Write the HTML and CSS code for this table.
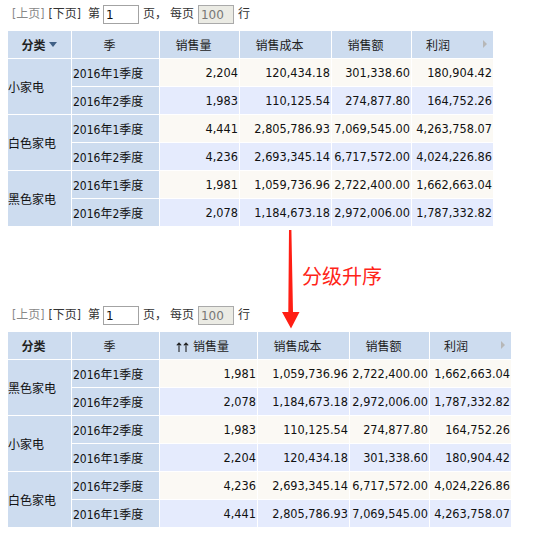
FILE: index.html
```html
<!DOCTYPE html>
<html lang="zh">
<head>
<meta charset="utf-8">
<title>分级升序</title>
<link rel="stylesheet" href="styles.css">
</head>
<body>
<div class="pager">
  <span class="pg-prev">[上页]</span>
  <span class="pg-next">[下页]</span>
  <span class="pg-di">第</span>
  <input class="pg-num" type="text" value="1">
  <span class="pg-ye">页，</span>
  <span class="pg-mei">每页</span>
  <input class="pg-size" type="text" value="100" disabled>
  <span class="pg-hang">行</span>
</div>
<table class="grid grid-a">
  <thead>
    <tr>
      <th class="c-cat b"><span>分类</span><i class="sortdesc"></i></th>
      <th class="c-q"><span>季</span><i class="ph"></i></th>
      <th class="c-n1"><span>销售量</span><i class="ph"></i></th>
      <th class="c-n2"><span>销售成本</span><i class="ph"></i></th>
      <th class="c-n3"><span>销售额</span><i class="ph"></i></th>
      <th class="c-n4 more"><span>利润</span><i class="ph"></i></th>
    </tr>
  </thead>
  <tbody>
    <tr class="odd"><td class="cat" rowspan="2">小家电</td><td class="q">2016年1季度</td><td class="n">2,204</td><td class="n">120,434.18</td><td class="n">301,338.60</td><td class="n">180,904.42</td></tr>
    <tr class="even"><td class="q">2016年2季度</td><td class="n">1,983</td><td class="n">110,125.54</td><td class="n">274,877.80</td><td class="n">164,752.26</td></tr>
    <tr class="odd"><td class="cat" rowspan="2">白色家电</td><td class="q">2016年1季度</td><td class="n">4,441</td><td class="n">2,805,786.93</td><td class="n">7,069,545.00</td><td class="n">4,263,758.07</td></tr>
    <tr class="even"><td class="q">2016年2季度</td><td class="n">4,236</td><td class="n">2,693,345.14</td><td class="n">6,717,572.00</td><td class="n">4,024,226.86</td></tr>
    <tr class="odd"><td class="cat" rowspan="2">黑色家电</td><td class="q">2016年1季度</td><td class="n">1,981</td><td class="n">1,059,736.96</td><td class="n">2,722,400.00</td><td class="n">1,662,663.04</td></tr>
    <tr class="even"><td class="q">2016年2季度</td><td class="n">2,078</td><td class="n">1,184,673.18</td><td class="n">2,972,006.00</td><td class="n">1,787,332.82</td></tr>
  </tbody>
</table>
<div class="note">
  <svg class="note-arrow" width="18" height="99" viewBox="0 0 18 99">
    <polygon points="7,0 9.4,0 11,82 17.5,82 9,98.5 0,82 6.3,82" fill="#ff1e14"/>
  </svg>
  <span class="note-label">分级升序</span>
</div>
<div class="pager">
  <span class="pg-prev">[上页]</span>
  <span class="pg-next">[下页]</span>
  <span class="pg-di">第</span>
  <input class="pg-num" type="text" value="1">
  <span class="pg-ye">页，</span>
  <span class="pg-mei">每页</span>
  <input class="pg-size" type="text" value="100" disabled>
  <span class="pg-hang">行</span>
</div>
<table class="grid grid-b">
  <thead>
    <tr>
      <th class="c-cat b"><span>分类</span><i class="ph"></i></th>
      <th class="c-q"><span>季</span><i class="ph"></i></th>
      <th class="c-n1w"><svg class="asc" width="13" height="10" viewBox="0 0 13 10"><path d="M3 10V1M0.8 3.4L3 1L5.2 3.4M10 10V1M7.8 3.4L10 1L12.2 3.4" fill="none" stroke="#222" stroke-width="1.1"/></svg><span>销售量</span><i class="ph"></i></th>
      <th class="c-n2"><span>销售成本</span><i class="ph"></i></th>
      <th class="c-n3"><span>销售额</span><i class="ph"></i></th>
      <th class="c-n4 more"><span>利润</span><i class="ph"></i></th>
    </tr>
  </thead>
  <tbody>
    <tr class="odd"><td class="cat" rowspan="2">黑色家电</td><td class="q">2016年1季度</td><td class="n">1,981</td><td class="n">1,059,736.96</td><td class="n">2,722,400.00</td><td class="n">1,662,663.04</td></tr>
    <tr class="even"><td class="q">2016年2季度</td><td class="n">2,078</td><td class="n">1,184,673.18</td><td class="n">2,972,006.00</td><td class="n">1,787,332.82</td></tr>
    <tr class="odd"><td class="cat" rowspan="2">小家电</td><td class="q">2016年2季度</td><td class="n">1,983</td><td class="n">110,125.54</td><td class="n">274,877.80</td><td class="n">164,752.26</td></tr>
    <tr class="even"><td class="q">2016年1季度</td><td class="n">2,204</td><td class="n">120,434.18</td><td class="n">301,338.60</td><td class="n">180,904.42</td></tr>
    <tr class="odd"><td class="cat" rowspan="2">白色家电</td><td class="q">2016年2季度</td><td class="n">4,236</td><td class="n">2,693,345.14</td><td class="n">6,717,572.00</td><td class="n">4,024,226.86</td></tr>
    <tr class="even"><td class="q">2016年1季度</td><td class="n">4,441</td><td class="n">2,805,786.93</td><td class="n">7,069,545.00</td><td class="n">4,263,758.07</td></tr>
  </tbody>
</table>
</body>
</html>
```
FILE: styles.css
```css
html, body {
  background: #fff;
}
body {
  margin: 0;
  padding: 0 8px;
  font-family: "DejaVu Sans Condensed", "DejaVu Sans", "Noto Sans CJK SC", sans-serif;
  font-size: 12px;
  color: #222;
}

.pager {
  display: flex;
  align-items: center;
  height: 19px;
  padding: 5px 0 7px;
  line-height: 19px;
  color: #333;
}
.pg-prev { margin-left: 4px; color: #888; }
.pg-next { margin-left: 4px; }
.pg-di { margin-left: 7px; }
.pg-num,
.pg-size {
  box-sizing: border-box;
  width: 36px;
  height: 19px;
  margin: 0 0 0 3px;
  padding: 0 2px;
  border: 1px solid #a3a3a3;
  font-family: "DejaVu Sans", sans-serif;
  font-size: 12px;
  color: #111;
  background: #fff;
  outline: none;
}
.pg-size {
  margin-left: 4px;
  background: #ebebe4;
  color: #777;
  border-color: #aaa;
}
.pg-ye { margin-left: 4px; }
.pg-mei { margin-left: 3px; }
.pg-hang { margin-left: 4px; }

.grid {
  border-collapse: separate;
  border-spacing: 0;
  table-layout: fixed;
}
.grid-a { width: 486px; }
.grid-b { width: 504px; }

.grid th,
.grid td {
  box-sizing: border-box;
  height: 28px;
  padding: 0;
  border-right: 1px solid #fff;
  border-bottom: 1px solid #fff;
  white-space: nowrap;
  overflow: hidden;
}
.grid th {
  background: #cddcef;
  font-weight: normal;
  text-align: center;
  color: #222;
}
.grid th.b { font-weight: bold; }
.c-cat { width: 64px; }
.c-q { width: 88px; }
.c-n1 { width: 80px; }
.c-n1w { width: 98px; }
.c-n2 { width: 92px; }
.c-n3 { width: 80px; }
.c-n4 { width: 82px; }

.ph {
  display: inline-block;
  width: 12px;
}
.sortdesc {
  display: inline-block;
  width: 0;
  height: 0;
  margin: 0 1px 0 3px;
  border-left: 4px solid transparent;
  border-right: 4px solid transparent;
  border-top: 5px solid #3f5f85;
  vertical-align: 3px;
}
.asc {
  margin-right: 4px;
  vertical-align: -1px;
}
.grid th.more {
  position: relative;
  padding-right: 17px;
}
.grid th.more::after {
  content: "";
  position: absolute;
  right: 6px;
  top: 9px;
  border-left: 4px solid #b7b7b7;
  border-top: 4px solid transparent;
  border-bottom: 4px solid transparent;
}

.grid td {
  color: #111;
}
.grid td.cat {
  background: #cddcef;
  text-align: left;
}
.grid td.q {
  background: #cddcef;
  text-align: left;
  padding-left: 1px;
}
.grid td.n {
  text-align: right;
  padding-right: 1px;
  font-size: 12.6px;
}
.grid tr.odd td.n { background: #fbf9f4; }
.grid tr.even td.n { background: #e5ebfd; }

.note {
  position: relative;
  height: 74px;
}
.note-arrow {
  position: absolute;
  left: 274px;
  top: 3px;
}
.note-label {
  position: absolute;
  left: 294px;
  top: 37px;
  font-family: "Noto Sans CJK SC", sans-serif;
  font-size: 20px;
  line-height: 24px;
  color: #ff2418;
}
```
